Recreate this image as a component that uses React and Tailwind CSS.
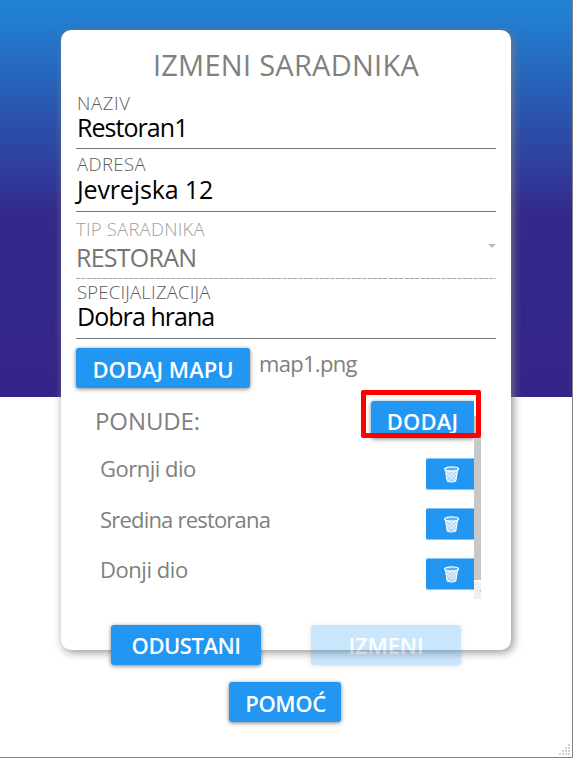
import React from "react";

const raised = "bg-[#2196f3] text-white font-semibold rounded-[3px] shadow-[0_1px_4px_rgba(0,0,0,0.5)] whitespace-nowrap";

function Field({ label, value, className, labelClass, valueClass }) {
  return (
    <div className={`flex flex-col whitespace-nowrap ${className}`}>
      <label className={`h-5 text-[18.5px] font-light leading-5 ${labelClass}`}>{label}</label>
      <div className={`text-[25px] leading-7 ${valueClass}`}>{value}</div>
    </div>
  );
}

function Trash() {
  return (
    <svg width="17" height="17" viewBox="0 0 16 17" fill="none" stroke="white">
      <path d="M2 4 3.6 14.3Q3.8 16 8 16T12.4 14.3L14 4Z" fill="#a5d5fb" strokeWidth="1.1" />
      <path d="M3 7 11.5 15M5 5 12.5 12.5M9 5 13 9M13 7 4.5 15M11 5 3.5 12.5M7 5 3 9" strokeWidth="0.8" />
      <ellipse cx="8" cy="3" rx="7" ry="2.1" fill="#5cb2f6" strokeWidth="1.3" />
    </svg>
  );
}

function Offer({ name, className, textClass }) {
  return (
    <div className={`flex h-8 items-center justify-between pl-[10px] ${className}`}>
      <span className={`text-[22px] leading-8 ${textClass}`}>{name}</span>
      <button className="flex h-8 w-12 items-center justify-center rounded-l-[2px] border-y border-[#85c3f5] bg-[#2196f3] pl-[3px]">
        <Trash />
      </button>
    </div>
  );
}

export default function App() {
  return (
    <div className="relative h-[758px] w-[573px] overflow-hidden border-r border-b border-[#838383] bg-white bg-[linear-gradient(#2283d4_0px,#227bce_25px,#33298b_215px,#33248a_397px)] bg-[length:100%_397px] bg-no-repeat pl-[61px] pt-[30px] font-['Open_Sans','Noto_Sans',sans-serif] text-[#808080]">
      <main className="h-[620px] w-[450px] rounded-[10px] bg-white px-[15px] shadow-[2px_2px_10px_rgba(128,128,128,0.9)]">
        <h1 className="h-[63px] pt-[14px] text-center text-[29px] leading-[42px] tracking-[0.27px]">IZMENI SARADNIKA</h1>
        <Field label="NAZIV" value="Restoran1" className="h-[56px] border-b border-[#757575] pl-px" labelClass="text-[#5c5c5c] tracking-[0.65px]" valueClass="text-black tracking-[-0.95px]" />
        <Field label="ADRESA" value="Jevrejska 12" className="h-[63px] border-b border-[#757575] pt-[5px] pl-px" labelClass="text-[#5c5c5c] tracking-[0.4px]" valueClass="pt-px text-black tracking-[-0.15px]" />
        <div className="flex h-[67px] items-center justify-between bg-[repeating-linear-gradient(90deg,#a8a8a8_0px,#a8a8a8_4px,#ececec_4px,#ececec_5.3px)] bg-[length:100%_1px] bg-bottom bg-no-repeat">
          <Field label="TIP SARADNIKA" value="RESTORAN" className="h-[67px] pt-[7px]" labelClass="text-[#a0a0a0] tracking-[0.2px]" valueClass="pt-1 text-[#757575] tracking-[-0.75px]" />
          <span className="border-x-4 border-t-4 border-x-transparent border-t-[#bdbdbd]" />
        </div>
        <Field label="SPECIJALIZACIJA" value="Dobra hrana" className="h-[60px] border-b border-[#757575] pt-[3px] pl-px" labelClass="text-[#5c5c5c] tracking-[0.2px]" valueClass="text-black tracking-[-0.95px]" />
        <div className="mt-[9px] flex">
          <button className={`h-10 w-[174px] pt-[2px] text-[22px] ${raised}`}>DODAJ MAPU</button>
          <span className="ml-[9px] text-[22px] leading-[30px] tracking-[-0.7px]">map1.png</span>
        </div>
        <section className="relative ml-[14px] mt-[10px] flex h-[201px] w-[391px] overflow-hidden">
          <div className="w-[384px]">
            <div className="flex h-[60px] justify-between overflow-hidden pl-[5px]">
              <h2 className="pt-[7px] text-[24px] leading-8 tracking-[-0.1px]">PONUDE:</h2>
              <button className={`mt-[3px] h-[37px] w-[103px] rounded-r-none pt-[4px] text-[22px] leading-[31px] tracking-[0.2px] ${raised}`}>DODAJ</button>
            </div>
            <Offer name="Gornji dio" textClass="-mt-[13px] tracking-[-0.5px]" />
            <Offer name="Sredina restorana" className="mt-[18px]" textClass="-mt-[11px] tracking-[-0.8px]" />
            <Offer name="Donji dio" className="mt-[18px]" textClass="-mt-[11px] tracking-[-0.45px]" />
          </div>
          <div className="flex w-[7px] flex-col">
            <div className="mt-[18px] h-[164px] bg-[#c8c8c8]" />
            <div className="mt-[2px] flex h-[17px] items-center justify-end bg-[#f0f0f0]">
              <span className="border-l-2 border-t-2 border-l-transparent border-t-[#bdbdbd]" />
            </div>
          </div>
        </section>
      </main>
      <div className="-mt-[25px] ml-[50px] flex gap-[50px]">
        <button className={`relative h-10 w-[150px] text-[22px] tracking-[-0.5px] ${raised}`}>ODUSTANI</button>
        <button className={`relative h-10 w-[150px] text-[22px] tracking-[-0.15px] opacity-[0.23] ${raised}`}>IZMENI</button>
      </div>
      <button className={`ml-[168px] mt-[17px] h-10 w-[112px] pt-[3px] pl-[7px] pr-[6px] text-[22px] tracking-[-0.4px] ${raised}`}>POMOĆ</button>
      <div className="pointer-events-none absolute left-[361px] top-[390px] h-[48px] w-[120px] rounded-[2px] border-[5px] border-[#ff0000]" />
      <svg className="absolute bottom-[1px] right-[1px]" width="12" height="12" fill="#cdd1e3">
        <path d="M9 0h2v2h-2zM9 3h2v2h-2zM6 3h2v2h-2zM9 6h2v2h-2zM6 6h2v2h-2zM3 6h2v2h-2zM9 9h2v2h-2zM6 9h2v2h-2zM3 9h2v2h-2zM0 9h2v2h-2z" />
      </svg>
    </div>
  );
}
